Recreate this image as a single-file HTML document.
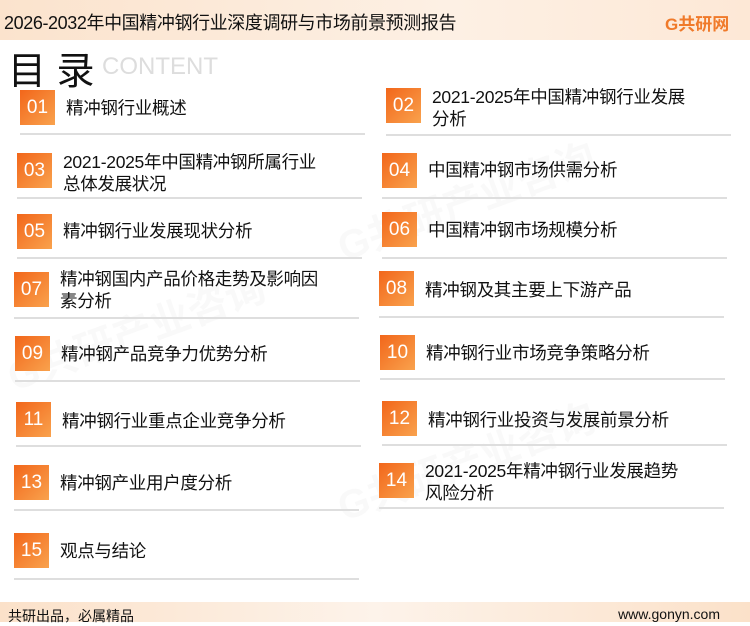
<!DOCTYPE html>
<html><head><meta charset="utf-8"><style>
*{margin:0;padding:0;box-sizing:border-box}
body{width:750px;height:622px;position:relative;overflow:hidden;background:#fff;font-family:"Liberation Sans","Noto Sans CJK SC",sans-serif;color:#111}
.hdr{position:absolute;left:0;top:0;width:750px;height:40px;background:linear-gradient(90deg,#fbe3cd,#fdf0e4 60%,#fde8d6)}
.hdr .t{position:absolute;left:4px;top:9px;font-size:18px;letter-spacing:-0.4px}
.logo{position:absolute;left:665px;top:10px;font-size:17px;font-weight:bold;color:#f07a2a;width:80px}
.ftr{position:absolute;left:0;top:602px;width:750px;height:20px;background:linear-gradient(90deg,#fbe1c9,#fdf3ea 50%,#fbe1c9)}
.ftr .a{position:absolute;left:8px;top:4px;font-size:14px}
.ftr .b{position:absolute;right:30px;top:4px;font-size:14px}
.ml{position:absolute;left:8px;top:40px;font-size:38px}
.ct{position:absolute;left:102px;top:53px;font-size:24px;color:#ddd}
.bx{position:absolute;width:35px;height:35px;background:linear-gradient(135deg,#f2661a,#f9a24d);color:#fff;font-size:19px;text-align:center;line-height:35px}
.tx{position:absolute;font-size:17.5px;line-height:22px;color:#111;letter-spacing:-0.3px}
.ln{position:absolute;height:2px;background:#dedede}
.wm{position:absolute;color:rgba(0,0,0,0.025);font-size:40px;font-weight:bold;transform:rotate(-20deg);white-space:nowrap}
</style></head><body>
<div class="wm" style="left:330px;top:170px">G共研产业咨询</div>
<div class="wm" style="left:0px;top:300px">G共研产业咨询</div>
<div class="wm" style="left:330px;top:430px">G共研产业咨询</div>
<div class="hdr"><div class="t">2026-2032年中国精冲钢行业深度调研与市场前景预测报告</div><div class="logo">G共研网</div></div>
<div class="ml">目 录</div><div class="ct">CONTENT</div>

<div class="bx" style="left:20px;top:90px">01</div><div class="tx" style="left:66px;top:97px">精冲钢行业概述</div><div class="ln" style="left:20px;top:133px;width:345px"></div>
<div class="bx" style="left:386px;top:88px">02</div><div class="tx" style="left:432px;top:86px">2021-2025年中国精冲钢行业发展<br>分析</div><div class="ln" style="left:386px;top:134px;width:345px"></div>

<div class="bx" style="left:17px;top:153px">03</div><div class="tx" style="left:63px;top:151px">2021-2025年中国精冲钢所属行业<br>总体发展状况</div><div class="ln" style="left:17px;top:197px;width:345px"></div>
<div class="bx" style="left:382px;top:153px">04</div><div class="tx" style="left:428px;top:159px">中国精冲钢市场供需分析</div><div class="ln" style="left:382px;top:197px;width:345px"></div>

<div class="bx" style="left:17px;top:214px">05</div><div class="tx" style="left:63px;top:220px">精冲钢行业发展现状分析</div><div class="ln" style="left:17px;top:257px;width:345px"></div>
<div class="bx" style="left:382px;top:212px">06</div><div class="tx" style="left:428px;top:219px">中国精冲钢市场规模分析</div><div class="ln" style="left:382px;top:257px;width:345px"></div>

<div class="bx" style="left:14px;top:272px">07</div><div class="tx" style="left:60px;top:268px">精冲钢国内产品价格走势及影响因<br>素分析</div><div class="ln" style="left:14px;top:317px;width:345px"></div>
<div class="bx" style="left:379px;top:271px">08</div><div class="tx" style="left:425px;top:279px">精冲钢及其主要上下游产品</div><div class="ln" style="left:379px;top:316px;width:345px"></div>

<div class="bx" style="left:15px;top:336px">09</div><div class="tx" style="left:61px;top:343px">精冲钢产品竞争力优势分析</div><div class="ln" style="left:15px;top:380px;width:345px"></div>
<div class="bx" style="left:380px;top:335px">10</div><div class="tx" style="left:426px;top:342px">精冲钢行业市场竞争策略分析</div><div class="ln" style="left:380px;top:378px;width:345px"></div>

<div class="bx" style="left:16px;top:402px">11</div><div class="tx" style="left:62px;top:410px">精冲钢行业重点企业竞争分析</div><div class="ln" style="left:16px;top:445px;width:345px"></div>
<div class="bx" style="left:382px;top:401px">12</div><div class="tx" style="left:428px;top:409px">精冲钢行业投资与发展前景分析</div><div class="ln" style="left:382px;top:444px;width:345px"></div>

<div class="bx" style="left:14px;top:465px">13</div><div class="tx" style="left:60px;top:472px">精冲钢产业用户度分析</div><div class="ln" style="left:14px;top:509px;width:345px"></div>
<div class="bx" style="left:379px;top:463px">14</div><div class="tx" style="left:425px;top:460px">2021-2025年精冲钢行业发展趋势<br>风险分析</div><div class="ln" style="left:379px;top:507px;width:345px"></div>

<div class="bx" style="left:14px;top:533px">15</div><div class="tx" style="left:60px;top:540px">观点与结论</div><div class="ln" style="left:14px;top:578px;width:345px"></div>

<div class="ftr"><div class="a">共研出品，必属精品</div><div class="b">www.gonyn.com</div></div>
</body></html>
